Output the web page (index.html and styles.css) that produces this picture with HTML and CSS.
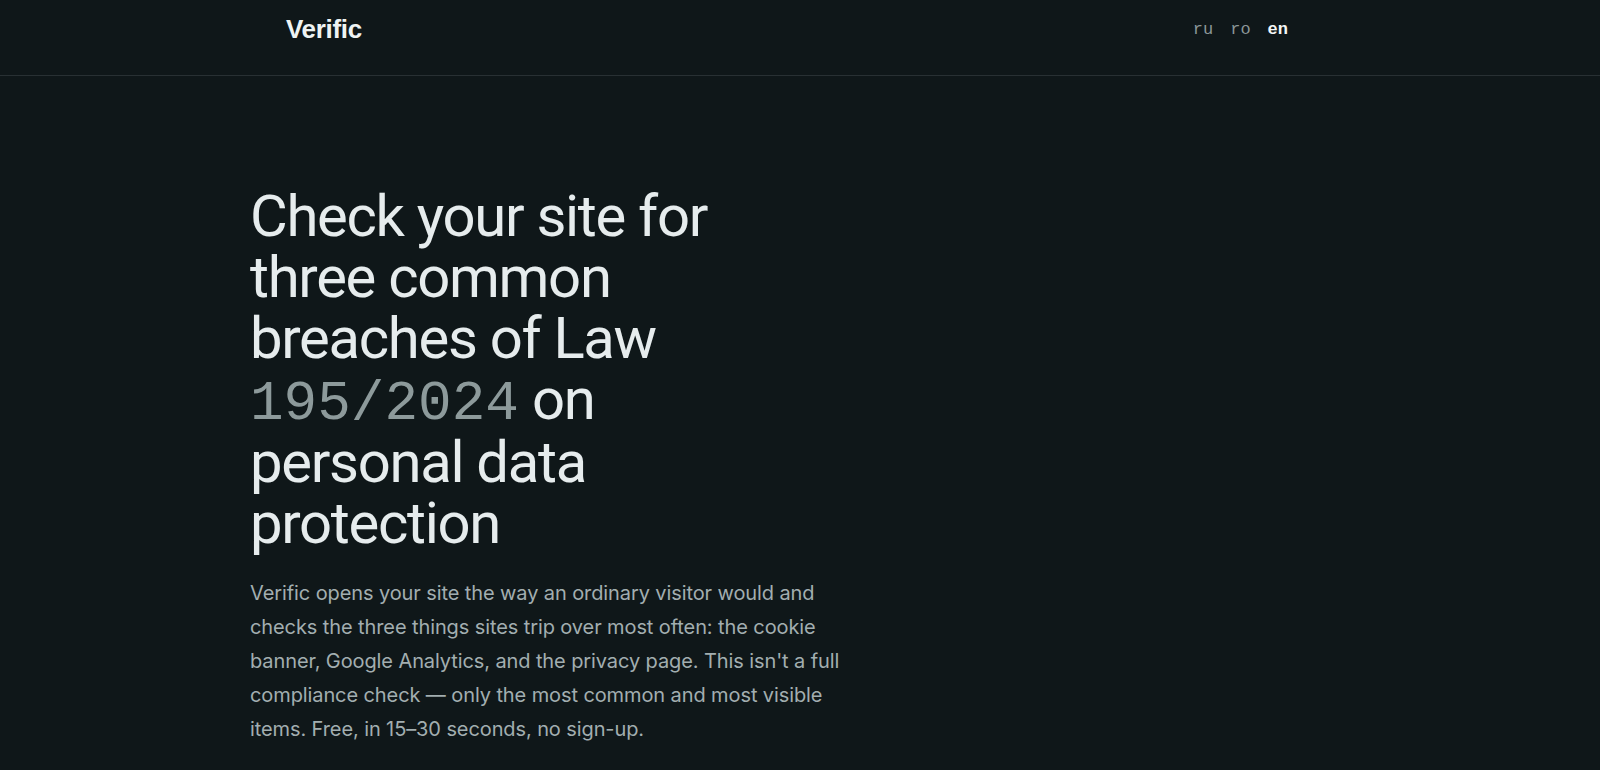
FILE: index.html
```html
<!DOCTYPE html>
<html lang="en">
<head>
<meta charset="utf-8">
<title>Verific</title>
<link rel="stylesheet" href="styles.css">
</head>
<body>
<header class="site-header">
  <div class="header-inner">
    <a class="logo" href="#">Verific</a>
    <nav class="langs">
      <a class="lang" href="#">ru</a>
      <a class="lang" href="#">ro</a>
      <a class="lang lang-active" href="#">en</a>
    </nav>
  </div>
</header>
<main class="hero">
  <h1 class="hero-title">Check your site for three common breaches of Law <span class="law">195/2024</span> on personal data protection</h1>
  <p class="hero-lead">Verific opens your site the way an ordinary visitor would and checks the three things sites trip over most often: the cookie banner, Google Analytics, and the privacy page. This isn't a full compliance check — only the most common and most visible items. Free, in 15–30 seconds, no sign-up.</p>
</main>
</body>
</html>
```
FILE: styles.css
```css
html, body {
  margin: 0;
  padding: 0;
  background: #0f1719;
  height: 100%;
}
body {
  font-family: "Roboto", "Inter", sans-serif;
  color: #e6eced;
  overflow: hidden;
}
a { text-decoration: none; color: inherit; }

.site-header {
  border-bottom: 1px solid #283033;
}
.header-inner {
  width: 1002px;
  margin: 0 auto 0 286px;
  height: 75px;
  display: flex;
  align-items: center;
  justify-content: space-between;
}
.logo {
  font-family: "Liberation Sans", Arial, sans-serif;
  font-weight: 700;
  font-size: 26px;
  letter-spacing: -0.3px;
  color: #eef3f3;
  margin-top: -16px;
}
.langs {
  display: flex;
  gap: 17px;
  margin-top: -16px;
}
.lang {
  font-family: "Liberation Mono", monospace;
  font-size: 17px;
  color: #8a9697;
}
.lang-active {
  color: #f4f7f7;
  font-weight: 700;
}

.hero {
  width: 1100px;
  margin: 0 auto;
  padding-top: 110px;
}
.hero-title {
  margin: 0;
  max-width: 500px;
  font-weight: 400;
  font-size: 58px;
  line-height: 61px;
  letter-spacing: -1.3px;
  color: #e6eced;
}
.law {
  font-family: "Liberation Mono", monospace;
  font-weight: 400;
  font-size: 56px;
  line-height: 1;
  letter-spacing: 0;
  color: #8d9a9b;
}
.hero-lead {
  margin: 22px 0 0;
  max-width: 600px;
  font-family: "Inter", "Roboto", sans-serif;
  font-size: 20px;
  line-height: 34px;
  color: #a2aeb0;
  letter-spacing: -0.1px;
}
```
